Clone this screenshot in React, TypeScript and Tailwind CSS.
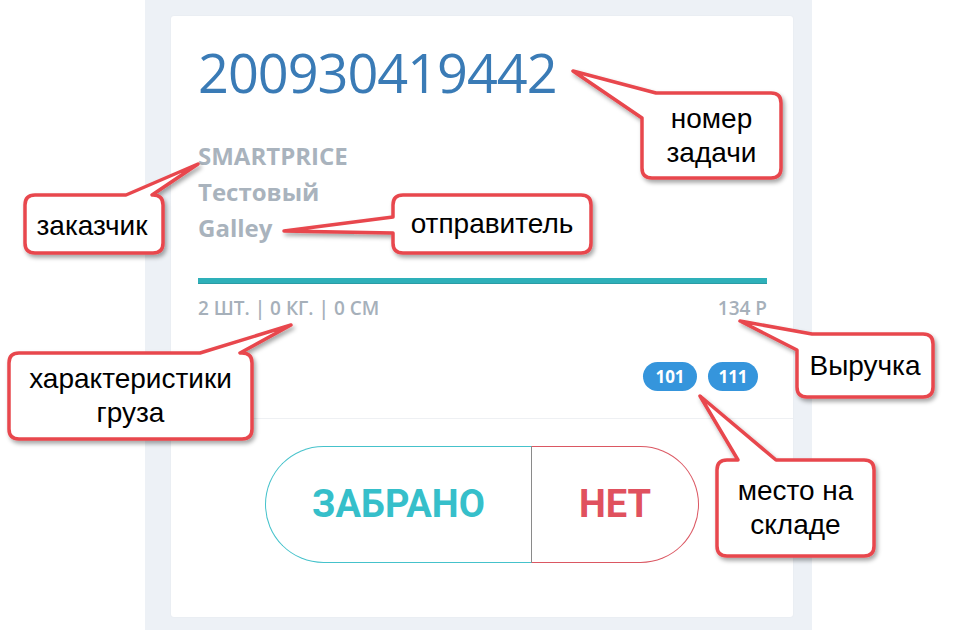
import React from "react";

const callouts: { d: string }[] = [
  { d: "M 656 93 L 771 93 Q 781 93 781 103 L 781 168 Q 781 178 771 178 L 652 178 Q 642 178 642 168 L 642 118 L 573 71 Z" },
  { d: "M 35 195 L 126 195 L 198 164 L 152 195 L 153 195 Q 163 195 163 205 L 163 243 Q 163 253 153 253 L 35 253 Q 25 253 25 243 L 25 205 Q 25 195 35 195 Z" },
  { d: "M 403 195 L 581 195 Q 591 195 591 205 L 591 243 Q 591 253 581 253 L 403 253 Q 393 253 393 243 L 393 233 L 284 231 L 393 217 L 393 205 Q 393 195 403 195 Z" },
  { d: "M 19 353 L 200 353 L 291 325 L 240 353 L 242 353 Q 252 353 252 363 L 252 429 Q 252 439 242 439 L 19 439 Q 9 439 9 429 L 9 363 Q 9 353 19 353 Z" },
  { d: "M 812 334 L 923 334 Q 933 334 933 344 L 933 387 Q 933 397 923 397 L 807 397 Q 797 397 797 387 L 797 350 L 740 321 Z" },
  { d: "M 727 460 L 738 460 L 700 396 L 776 460 L 864 460 Q 874 460 874 470 L 874 546 Q 874 556 864 556 L 727 556 Q 717 556 717 546 L 717 470 Q 717 460 727 460 Z" },
];

function Label({ x, y, w, h, lines }: { x: number; y: number; w: number; h: number; lines: string[] }) {
  return (
    <div
      className="absolute flex flex-col items-center justify-center text-[28px] leading-[34px] text-black"
      style={{ left: x, top: y, width: w, height: h, fontFamily: '"Liberation Sans", Arial, sans-serif' }}
    >
      {lines.map((l) => (
        <span key={l} className="whitespace-nowrap">{l}</span>
      ))}
    </div>
  );
}

export default function App() {
  return (
    <div className="relative w-[953px] h-[630px] bg-white overflow-hidden" style={{ fontFamily: '"Open Sans", sans-serif' }}>
      <div className="ml-[145px] w-[667px] h-[630px] bg-[#edf1f6] pt-[16px] pl-[26px]">
        <div className="w-[622px] h-[601px] bg-white rounded-[3px] shadow-[0_0_2px_rgba(0,0,0,0.05)] flex flex-col">
          <div className="px-[27px] pr-[26px] pt-[26px]">
            <div className="text-[54px] leading-[60px] tracking-[-1px] text-[#3a7bb6] font-normal">200930419442</div>
            <div className="mt-[36px] text-[24px] leading-[36px] font-bold text-[#a9b3bd]">
              <div>SMARTPRICE</div>
              <div>Тестовый</div>
              <div>Galley</div>
            </div>
            <div className="mt-[32px] h-[6px] bg-[#2eb0b9] border-b border-[#2a9ca5]" />
            <div className="mt-[12px] flex justify-between text-[19px] leading-[24px] font-semibold text-[#a6b0ba]">
              <span>2 ШТ. | 0 КГ. | 0 СМ</span>
              <span>134 Р</span>
            </div>
            <div className="mt-[42px] flex justify-end gap-[11px] pr-[9px]">
              <span className="w-[54px] h-[29px] rounded-full bg-[#3595dc] text-white text-[17px] font-bold flex items-center justify-center">101</span>
              <span className="w-[50px] h-[29px] rounded-full bg-[#3595dc] text-white text-[17px] font-bold flex items-center justify-center">111</span>
            </div>
          </div>
          <div className="mt-[27px] h-px bg-[#eef0f3]" />
          <div className="mt-[27px] flex justify-center" style={{ fontFamily: 'Roboto, sans-serif' }}>
            <div className="w-[266px] h-[117px] rounded-l-[59px] border border-r-0 border-[#45c2cb] flex items-center justify-center text-[38px] font-bold text-[#36bfca]">
              ЗАБРАНО
            </div>
            <div className="w-px h-[117px] bg-[#8a8a8a]" />
            <div className="w-[167px] h-[117px] rounded-r-[59px] border border-l-0 border-[#db5762] flex items-center justify-center text-[38px] font-bold text-[#e0515e]">
              НЕТ
            </div>
          </div>
        </div>
      </div>

      <svg className="absolute left-0 top-0 pointer-events-none" width="953" height="630" viewBox="0 0 953 630">
        <defs>
          <filter id="sh" x="-20%" y="-20%" width="140%" height="140%">
            <feDropShadow dx="2" dy="3" stdDeviation="2" floodColor="#000" floodOpacity="0.35" />
          </filter>
        </defs>
        {callouts.map((c, i) => (
          <path key={i} d={c.d} fill="#fff" stroke="#e8474d" strokeWidth="3.5" strokeLinejoin="round" filter="url(#sh)" />
        ))}
      </svg>

      <Label x={642} y={93} w={139} h={85} lines={["номер", "задачи"]} />
      <Label x={25} y={197} w={134} h={58} lines={["заказчик"]} />
      <Label x={393} y={195} w={198} h={58} lines={["отправитель"]} />
      <Label x={9} y={353} w={243} h={86} lines={["характеристики", "груза"]} />
      <Label x={797} y={334} w={136} h={63} lines={["Выручка"]} />
      <Label x={717} y={460} w={157} h={96} lines={["место на", "складе"]} />
    </div>
  );
}
